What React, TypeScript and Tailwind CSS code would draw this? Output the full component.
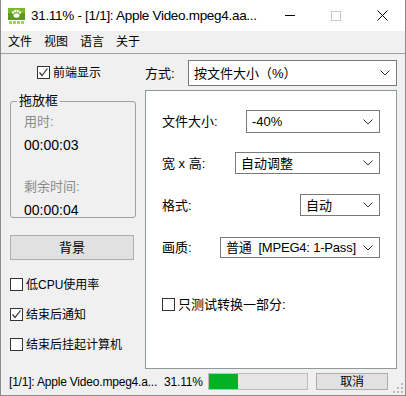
import React from 'react';

const font = '"Liberation Sans", "Noto Sans CJK SC", sans-serif';

function Chevron() {
  return (
    <svg width="10" height="6" viewBox="0 0 10 6" className="shrink-0">
      <polyline points="0.5,0.5 5,5 9.5,0.5" fill="none" stroke="#333" strokeWidth="1" />
    </svg>
  );
}

function Combo({ value, className }: { value: string; className: string }) {
  return (
    <div className={`flex items-center justify-between bg-white border border-[#7a7a7a] pl-[5px] pr-[6px] text-[13px] leading-none text-black ${className}`}>
      <span className="whitespace-pre">{value}</span>
      <Chevron />
    </div>
  );
}

function CheckBox({ checked, label, className = '' }: { checked?: boolean; label: string; className?: string }) {
  return (
    <div className={`flex items-center gap-[3px] text-[12px] leading-none ${className}`}>
      <div className="w-[13px] h-[13px] border border-[#333] bg-white flex items-center justify-center">
        {checked && (
          <svg width="11" height="11" viewBox="0 0 11 11">
            <polyline points="1.5,5.5 4,8.5 9.5,1.5" fill="none" stroke="#333" strokeWidth="1.2" />
          </svg>
        )}
      </div>
      <span>{label}</span>
    </div>
  );
}

function AppIcon() {
  return (
    <svg width="17" height="17" viewBox="0 0 17 17">
      <rect x="0" y="0" width="17" height="12" fill="#5a9d1a" />
      <rect x="0" y="0" width="17" height="5" fill="#7ab82e" />
      <ellipse cx="8.5" cy="7.5" rx="3" ry="2.2" fill="#fff" />
      <circle cx="5" cy="4.5" r="1.2" fill="#fff" />
      <circle cx="7.3" cy="3" r="1.2" fill="#fff" />
      <circle cx="9.7" cy="3" r="1.2" fill="#fff" />
      <circle cx="12" cy="4.5" r="1.2" fill="#fff" />
      <rect x="1" y="13" width="3" height="3" fill="#a8d060" />
      <rect x="5" y="13" width="3" height="3" fill="#a8d060" />
      <rect x="9" y="13" width="3" height="3" fill="#a8d060" />
      <rect x="13" y="13" width="3" height="3" fill="#a8d060" />
    </svg>
  );
}

export default function App() {
  return (
    <div
      className="w-[406px] h-[396px] flex flex-col bg-[#f0f0f0] border-x border-b border-[#8c8c8c] text-black overflow-hidden"
      style={{ fontFamily: font }}
    >
      {/* title bar */}
      <div className="h-[31px] bg-white flex items-center shrink-0">
        <div className="ml-[7px] mt-[1px]">
          <AppIcon />
        </div>
        <span className="ml-[6px] text-[13.5px] tracking-[-0.3px] leading-none whitespace-nowrap">31.11% - [1/1]: Apple Video.mpeg4.aa...</span>
        <div className="ml-auto flex items-center h-full">
          <div className="w-[46px] h-full flex items-center justify-center">
            <div className="w-[10px] h-px bg-black" />
          </div>
          <div className="w-[46px] h-full flex items-center justify-center">
            <div className="w-[10px] h-[10px] border border-[#c8c8c8]" />
          </div>
          <div className="w-[46px] h-full flex items-center justify-center">
            <svg width="11" height="11" viewBox="0 0 11 11">
              <path d="M0.5 0.5 L10.5 10.5 M10.5 0.5 L0.5 10.5" stroke="#000" strokeWidth="1" />
            </svg>
          </div>
        </div>
      </div>

      {/* menu bar */}
      <div className="h-[23px] flex items-center gap-[12px] pl-[7px] text-[12px] leading-none border-b border-[#a0a0a0] shrink-0">
        <span>文件</span>
        <span>视图</span>
        <span>语言</span>
        <span>关于</span>
      </div>

      {/* main */}
      <div className="flex flex-1">
        {/* left column */}
        <div className="w-[144px] shrink-0 flex flex-col pl-[9px]">
          <CheckBox checked label="前端显示" className="mt-[12px] ml-[27px]" />
          <div className="relative mt-[22px] w-[126px] h-[117px] border border-[#a0a0a0] rounded-[3px] pl-[13px] pt-[13px]">
            <span className="absolute -top-[8px] left-[6px] px-[2px] bg-[#f0f0f0] text-[13px] leading-none">拖放框</span>
            <div className="text-[13px] leading-none text-[#8a8a8a]">用时:</div>
            <div className="mt-[10px] text-[14px] leading-none">00:00:03</div>
            <div className="mt-[28px] text-[13px] leading-none text-[#8a8a8a]">剩余时间:</div>
            <div className="mt-[10px] text-[14px] leading-none">00:00:04</div>
          </div>
          <div className="mt-[17px] w-[124px] h-[25px] bg-[#e1e1e1] border border-[#adadad] flex items-center justify-center text-[13px] leading-none">
            背景
          </div>
          <CheckBox label="低CPU使用率" className="mt-[18px]" />
          <CheckBox checked label="结束后通知" className="mt-[17px]" />
          <CheckBox label="结束后挂起计算机" className="mt-[17px]" />
        </div>

        {/* right column */}
        <div className="flex-1 flex flex-col pr-[8px]">
          <div className="flex items-center mt-[6px] h-[26px]">
            <span className="text-[13px] leading-none w-[43px]">方式:</span>
            <Combo value="按文件大小（%）" className="flex-1 h-[26px]" />
          </div>
          <div className="mt-[4px] h-[279px] bg-white border border-[#8e9a98] flex flex-col pl-[16px] pr-[16px] text-[13px] leading-none">
            <div className="flex items-center mt-[19px]">
              <span>文件大小:</span>
              <Combo value="-40%" className="ml-auto w-[134px] h-[23px]" />
            </div>
            <div className="flex items-center mt-[19px]">
              <span>宽 x 高:</span>
              <Combo value="自动调整" className="ml-auto w-[145px] h-[22px]" />
            </div>
            <div className="flex items-center mt-[20px]">
              <span>格式:</span>
              <Combo value="自动" className="ml-auto w-[80px] h-[22px]" />
            </div>
            <div className="flex items-center mt-[21px]">
              <span>画质:</span>
              <Combo value="普通  [MPEG4: 1-Pass]" className="ml-auto w-[160px] h-[21px] tracking-[-0.2px]" />
            </div>
            <CheckBox label="只测试转换一部分:" className="mt-[40px] text-[13px]" />
          </div>
        </div>
      </div>

      {/* status bar */}
      <div className="h-[26px] shrink-0 flex items-center pl-[8px] text-[12px] tracking-[-0.2px] leading-none relative">
        <span className="whitespace-nowrap">[1/1]: Apple Video.mpeg4.a...</span>
        <span className="ml-[7px] whitespace-nowrap">31.11%</span>
        <div className="absolute left-[207px] top-[4px] w-[100px] h-[17px] bg-[#e6e6e6] border border-[#bcbcbc]">
          <div className="h-full w-[29px] bg-[#06b025]" />
        </div>
        <div className="absolute left-[315px] top-[4px] w-[72px] h-[17px] bg-[#e1e1e1] border border-[#adadad] flex items-center justify-center">
          取消
        </div>
        <svg width="11" height="11" viewBox="0 0 11 11" className="absolute right-[1px] bottom-[1px]">
          {[
            [8, 0],
            [4, 4],
            [8, 4],
            [0, 8],
            [4, 8],
            [8, 8],
          ].map(([x, y], i) => (
            <rect key={i} x={x} y={y} width="2" height="2" fill="#bcbcbc" />
          ))}
        </svg>
      </div>
    </div>
  );
}
